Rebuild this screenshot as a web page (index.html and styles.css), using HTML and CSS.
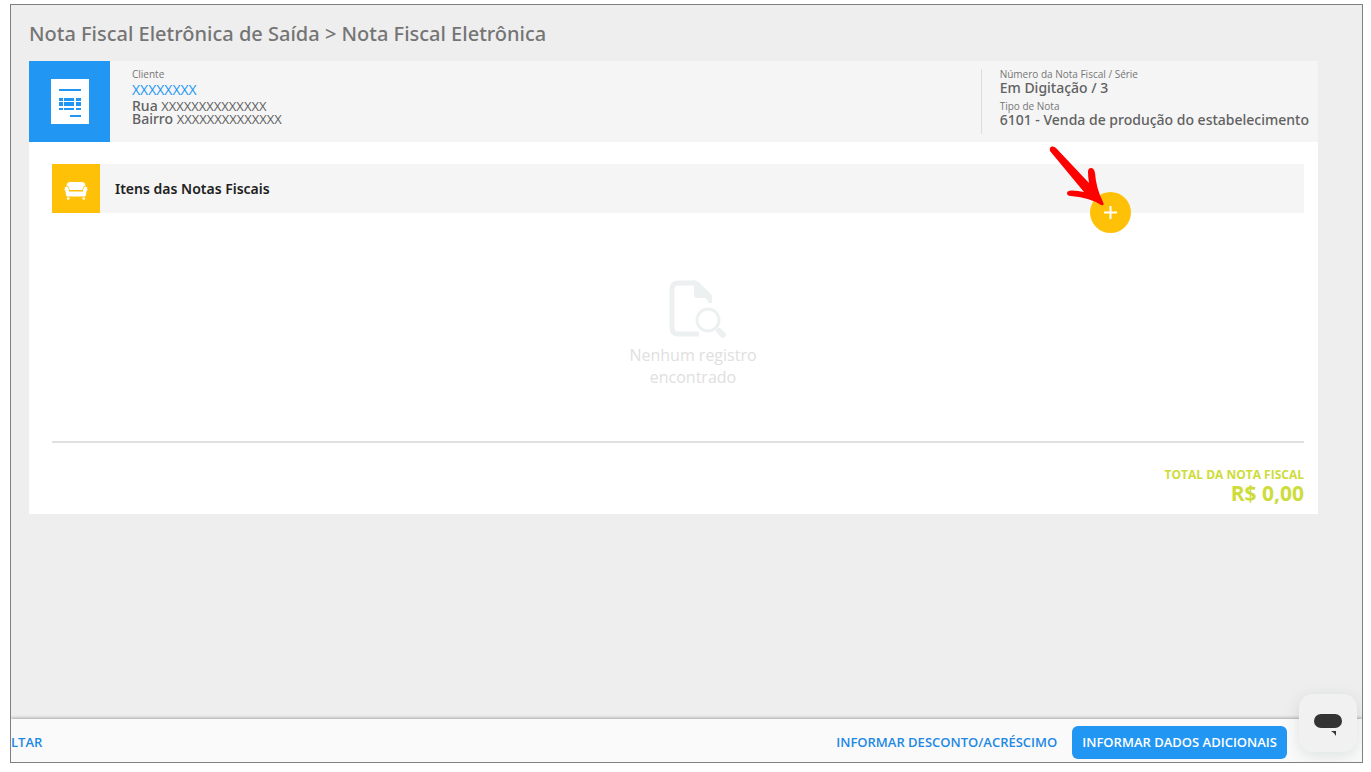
FILE: index.html
```
<!DOCTYPE html>
<html lang="pt-br">
<head>
  <meta charset="UTF-8">
  <meta name="viewport" content="width=device-width, initial-scale=1.0">
  <title>Nota Fiscal Eletrônica</title>
  <link rel="stylesheet" href="styles.css">
</head>
<body>
  <div class="window">
    <main class="content">
      <h1 class="page-title">Nota Fiscal Eletrônica de Saída &gt; Nota Fiscal Eletrônica</h1>

      <section class="invoice">
        <!-- Cabeçalho da nota -->
        <header class="invoice-header">
          <div class="invoice-icon">
            <svg width="38" height="45" viewBox="0 0 38 45" aria-hidden="true">
              <path fill="#fff" d="M0 0h38v45H0z"/>
              <path fill="#2196f3" d="M8 10h22v2H8zM8 19h4v3H8zM13 19h10v3H13zM25 19h5v3h-5zM8 23h4v4H8zM13 23h10v4H13zM25 23h5v4h-5zM8 29h4v2H8zM13 29h10v2H13zM25 29h5v2h-5zM19 36h11v2H19z"/>
            </svg>
          </div>
          <div class="client">
            <span class="label">Cliente</span>
            <a href="#" class="client-name">XXXXXXXX</a>
            <span class="value address">Rua <span class="masked">XXXXXXXXXXXXXX</span></span>
            <span class="value address">Bairro <span class="masked">XXXXXXXXXXXXXX</span></span>
          </div>
          <div class="invoice-info">
            <span class="label">Número da Nota Fiscal / Série</span>
            <span class="value">Em Digitação / 3</span>
            <span class="label">Tipo de Nota</span>
            <span class="value">6101 - Venda de produção do estabelecimento</span>
          </div>
        </header>

        <div class="invoice-body">
          <!-- Itens -->
          <div class="items-bar">
            <div class="items-icon">
              <svg width="24" height="18" viewBox="0 0 24 18" aria-hidden="true">
                <path fill="#fff" d="M6 0h12q3 0 3.500 3.500Q19 4 18.500 8h-13Q5 4 2.500 3.500 3 0 6 0z"/>
                <path fill="#fff" d="M0.500 7Q0.500 4.500 2.500 4.500 4.300 4.500 4.700 7L5 9.500h14l.3-2.500q.4-2.500 2.200-2.500 2 0 2 2.500 0 1.500-1 2.200L22 13q-.2 1.500-2 1.500H4Q2.200 14.500 2 13L1.500 9.200Q.5 8.500.5 7zM3 15.500h2.500v2H3zM18.500 15.500H21v2h-2.500z"/>
              </svg>
            </div>
            <h2 class="items-title">Itens das Notas Fiscais</h2>
            <button type="button" class="add-button" aria-label="Adicionar item">
              <svg width="13" height="13" viewBox="0 0 13 13" aria-hidden="true">
                <path stroke="#fff" stroke-width="2" d="M6.500 0v13M0 6.500h13"/>
              </svg>
            </button>
            <!-- Seta indicando o botão -->
            <svg class="arrow" width="56" height="62" viewBox="0 0 56 62" aria-hidden="true">
              <path fill="#f00" d="M1 5Q0 1 3 .500 5 0 7 2L40 37Q39 31 39 26 39 22 42 22 45 22 46 27 47 42 54 56 56 60 52 59 42 52 22 50 18 50 18 47 18 44.500 23 44.500 29 44.500 35 46z"/>
            </svg>
          </div>

          <!-- Lista vazia -->
          <div class="empty">
            <svg class="empty-icon" width="60" height="60" viewBox="0 0 60 60" aria-hidden="true">
              <path fill="none" stroke="#ecf0f1" stroke-width="5" d="M32 55H11q-6 0-6-6V10q0-6 6-6h17"/>
              <path fill="#ecf0f1" d="M25 1.500h3q2 0 4 2L43 14q2 2 2 4v6h-4q0-5-4-5H30q-3 0-3-3V6z"/>
              <circle cx="41" cy="41" r="11" fill="none" stroke="#ecf0f1" stroke-width="3"/>
              <path stroke="#ecf0f1" stroke-width="6" stroke-linecap="round" d="M52 52l4 4"/>
            </svg>
            <p class="empty-text">Nenhum registro encontrado</p>
          </div>

          <div class="total">
            <span class="total-label">TOTAL DA NOTA FISCAL</span>
            <span class="total-value">R$ 0,00</span>
          </div>
        </div>
      </section>
    </main>

    <footer class="actions">
      <button type="button" class="link-button">LTAR</button>
      <div class="actions-right">
        <button type="button" class="link-button">INFORMAR DESCONTO/ACRÉSCIMO</button>
        <button type="button" class="primary-button">INFORMAR DADOS ADICIONAIS</button>
      </div>
    </footer>

    <button type="button" class="chat" aria-label="Abrir chat">
      <svg width="28" height="22" viewBox="0 0 28 22" aria-hidden="true">
        <rect width="28" height="14" rx="7" fill="#333"/>
        <path fill="#333" d="M17 17h5v5q-1-3-5-5z"/>
      </svg>
    </button>
  </div>
</body>
</html>
```
FILE: styles.css
```
* {
  box-sizing: border-box;
}

body {
  margin: 0;
  padding: 4px 8px 9px 10px;
  height: 100vh;
  background-color: #fff;
  font-family: "Open Sans", sans-serif;
  color: #616161;
}

h1, h2, p {
  margin: 0;
}

button {
  border: none;
  padding: 0;
  font-family: inherit;
  cursor: pointer;
}

svg {
  display: block;
}

.window {
  position: relative;
  display: flex;
  flex-direction: column;
  height: 100%;
  border: 1px solid #808080;
  background-color: #eee;
  overflow: hidden;
}

.content {
  flex: 1;
  padding: 15px 44px 0 18px;
}

.page-title {
  margin-bottom: 13px;
  font-family: "Noto Sans", "Open Sans", sans-serif;
  font-size: 20px;
  line-height: 28px;
  font-weight: 500;
  color: #757575;
}

.invoice {
  background-color: #fff;
}

/* Cabeçalho */
.invoice-header {
  display: flex;
  background-color: #f5f5f5;
}

.invoice-icon {
  display: flex;
  align-items: center;
  justify-content: center;
  width: 81px;
  height: 81px;
  background-color: #2196f3;
}

.client,
.invoice-info {
  display: flex;
  flex-direction: column;
}

.client {
  flex: 1;
  padding: 7px 22px;
}

.invoice-info {
  margin: 8px 0;
  padding: 0 9px 0 18px;
  border-left: 1px solid #ddd;
}

.label {
  font-size: 10px;
  line-height: 11px;
  color: #757575;
}

.client .label {
  line-height: 12px;
}

.value {
  font-family: "Noto Sans", "Open Sans", sans-serif;
  font-size: 14px;
  line-height: 16px;
  font-weight: 500;
}

.invoice-info .value {
  margin-bottom: 5px;
}

.client-name {
  font-size: 14px;
  line-height: 19px;
  color: #2196f3;
  text-decoration: none;
}

.address {
  line-height: 13px;
}

.masked {
  font-family: "Open Sans", sans-serif;
  font-size: 13px;
  line-height: 12px;
  font-weight: 400;
}

/* Itens */
.invoice-body {
  padding: 22px 14px 11px 23px;
}

.items-bar {
  position: relative;
  display: flex;
  align-items: center;
  height: 49px;
  background-color: #f5f5f5;
}

.items-icon {
  display: flex;
  align-items: center;
  justify-content: center;
  width: 48px;
  height: 49px;
  padding-top: 5px;
  background-color: #ffc107;
}

.items-title {
  margin-left: 15px;
  font-family: "Noto Sans", "Open Sans", sans-serif;
  font-size: 14px;
  font-weight: 600;
  color: #212121;
}

.add-button {
  position: absolute;
  right: 173px;
  bottom: -20px;
  display: flex;
  align-items: center;
  justify-content: center;
  width: 41px;
  height: 41px;
  border-radius: 50%;
  background-color: #ffc107;
}

.arrow {
  position: absolute;
  right: 199px;
  top: -18px;
}

.empty {
  display: flex;
  flex-direction: column;
  align-items: center;
  padding: 66px 0 53px 30px;
  border-bottom: 2px solid #e0e0e0;
}

.empty-icon {
  margin-left: 8px;
}

.empty-text {
  width: 150px;
  margin-top: 5px;
  font-size: 16px;
  line-height: 22px;
  text-align: center;
  color: #e0e0e0;
}

.total {
  display: flex;
  flex-direction: column;
  align-items: flex-end;
  padding-top: 24px;
  font-weight: 700;
  color: #cddc39;
}

.total-label {
  font-size: 12px;
  line-height: 16px;
}

.total-value {
  font-size: 21px;
  line-height: 20px;
}

/* Rodapé */
.actions {
  display: flex;
  align-items: center;
  justify-content: space-between;
  padding: 7px 75px 3px 0;
  background-color: #fafafa;
  box-shadow: 0 -1px 3px rgba(0, 0, 0, 0.3);
}

.actions-right {
  display: flex;
  align-items: center;
  gap: 15px;
}

.link-button,
.primary-button {
  font-size: 13px;
  line-height: 33px;
  font-weight: 600;
}

.link-button {
  background: none;
  color: #1e88e5;
}

.primary-button {
  padding: 0 10px;
  border-radius: 6px;
  background-color: #2196f3;
  color: #fff;
}

.chat {
  position: absolute;
  right: 5px;
  bottom: 10px;
  display: flex;
  align-items: center;
  justify-content: center;
  width: 58px;
  height: 58px;
  padding-top: 4px;
  border-radius: 14px;
  background-color: #f1f1f1;
  box-shadow: 0 4px 16px rgba(0, 60, 50, 0.12);
}
```
